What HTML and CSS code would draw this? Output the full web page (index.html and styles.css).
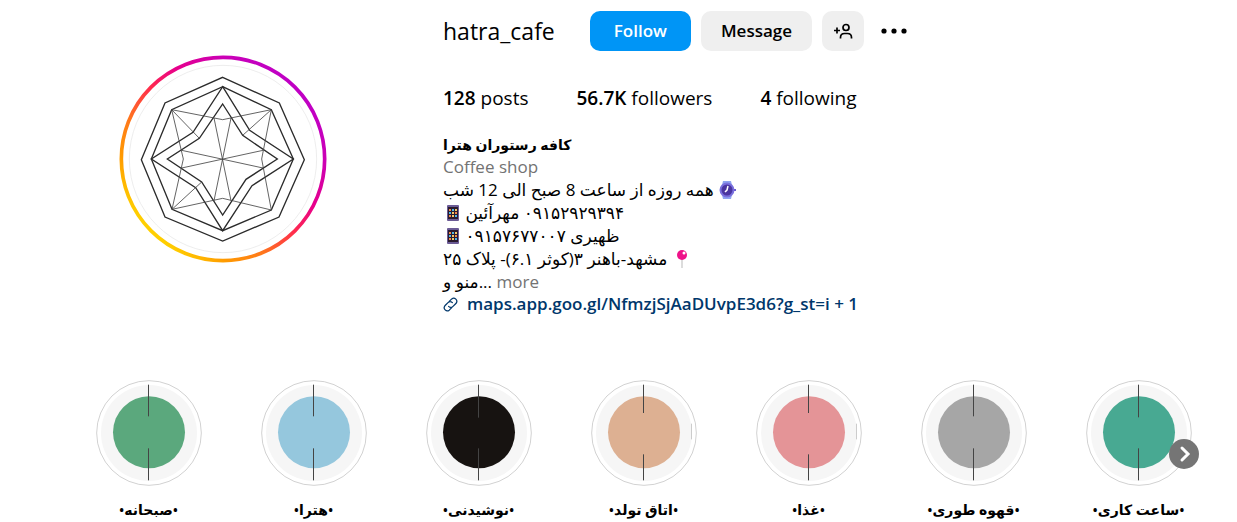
FILE: index.html
```html
<!DOCTYPE html>
<html lang="en">
<head>
<meta charset="utf-8">
<meta name="viewport" content="width=device-width, initial-scale=1">
<title>hatra_cafe</title>
<link rel="stylesheet" href="styles.css">
</head>
<body>
<main class="profile">

<header class="top">
	<div class="avatar">
		<svg viewBox="28 30 624 624" role="img" aria-label="hatra_cafe">
			<defs>
				<linearGradient id="ring" x1="0.15" y1="0.85" x2="0.85" y2="0.15">
					<stop offset="0" stop-color="#ffcf00"/>
					<stop offset="0.15" stop-color="#ff9a00"/>
					<stop offset="0.3" stop-color="#ff7a1a"/>
					<stop offset="0.5" stop-color="#ff2a4e"/>
					<stop offset="0.65" stop-color="#e8008a"/>
					<stop offset="0.85" stop-color="#cc00b4"/>
					<stop offset="1" stop-color="#c000c4"/>
				</linearGradient>
			</defs>
			<circle cx="340" cy="342" r="305" fill="none" stroke="url(#ring)" stroke-width="11"/>
			<circle cx="340" cy="342" r="281" fill="none" stroke="#e4e4e4" stroke-width="2"/>
			<g fill="none" stroke="#2b2b2b" stroke-width="4">
				<path d="M339 97L509 174L584 344L508 516L339 588L166 516L95 344L166 174Z"/>
				<path d="M339 125L485 194L551 342L485 495L339 557L187 493L125 342L186 194Z"/>
				<path d="M339 125L420 256L551 342L427 422L339 557L258 428L125 342L250 262Z"/>
				<path d="M339 177L399 271L503 342L409 403L339 510L276 411L173 342L269 280Z"/>
			</g>
			<g fill="none" stroke="#444" stroke-width="2.5">
				<path d="M313 219L364 467M364 219L313 467M216 316L460 369M460 316L216 369"/>
				<path d="M186 194L339 224L485 194L456 342L485 495L339 460L187 493L221 342Z"/>
				<path d="M186 194L269 280M485 194L399 271M187 493L276 411"/>
			</g>
		</svg>
	</div>

	<section class="info">
		<div class="title-row">
			<h1 class="username">hatra_cafe</h1>
			<div class="actions">
				<button class="btn btn-follow" type="button">Follow</button>
				<button class="btn btn-message" type="button">Message</button>
				<button class="btn btn-suggest" type="button" aria-label="Similar accounts">
					<svg viewBox="0 0 20 16" width="20" height="16" fill="none" stroke="#000" stroke-width="1.7">
						<circle cx="13" cy="4.5" r="3"/>
						<path d="M7.5 15.5v-1c0-2.500 1.500-4 4-4h3c2.500 0 4 1.500 4 4v1M4 4.500v6M1 7.500h6"/>
					</svg>
				</button>
				<button class="btn-more" type="button" aria-label="Options">
					<svg viewBox="0 0 26 6" width="26" height="6">
						<circle cx="3" cy="3" r="2.6"/><circle cx="13" cy="3" r="2.6"/><circle cx="23" cy="3" r="2.6"/>
					</svg>
				</button>
			</div>
		</div>

		<ul class="stats">
			<li><b>128</b> posts</li>
			<li><b>56.7K</b> followers</li>
			<li><b>4</b> following</li>
		</ul>

		<div class="bio">
			<div class="name" lang="fa" dir="rtl">کافه رستوران هترا</div>
			<div class="category">Coffee shop</div>
			<div class="line" lang="fa" dir="rtl"><svg class="emoji" viewBox="0 0 18 18"><path d="M5 0h8l1 4H4zM4 14h10l-1 4H5z" fill="#8fa4f0"/><circle cx="9" cy="9" r="6.5" fill="#4a35a0" stroke="#7a70dd" stroke-width="2"/><path d="M16 8h2v2h-2z" fill="#6a5bd0"/><path d="M10 5L9 9L7 11" fill="none" stroke="#fff" stroke-width="1.5"/></svg> همه روزه از ساعت 8 صبح الی 12 شب</div>
			<div class="line" lang="fa" dir="rtl">۰۹۱۵۲۹۲۹۳۹۴ مهرآئین <svg class="emoji" viewBox="1 0 18 18"><rect x="5" y="1" width="12" height="16" rx="1" fill="#6b5b95"/><rect x="6" y="3" width="10" height="12" fill="#2a1b2e"/><path d="M7 5h2v2H7zM13 8h2v2h-2zM7 11h2v2H7z" fill="#f08a4b"/><path d="M10 5h2v2h-2zM7 8h2v2H7zM13 11h2v2h-2z" fill="#4db8e8"/><path d="M13 5h2v2h-2zM10 8h2v2h-2zM10 11h2v2h-2z" fill="#f3c969"/></svg></div>
			<div class="line" lang="fa" dir="rtl">ظهیری ۰۹۱۵۷۶۷۷۰۰۷ <svg class="emoji" viewBox="1 0 18 18"><rect x="5" y="1" width="12" height="16" rx="1" fill="#6b5b95"/><rect x="6" y="3" width="10" height="12" fill="#2a1b2e"/><path d="M7 5h2v2H7zM13 8h2v2h-2zM7 11h2v2H7z" fill="#f08a4b"/><path d="M10 5h2v2h-2zM7 8h2v2H7zM13 11h2v2h-2z" fill="#4db8e8"/><path d="M13 5h2v2h-2zM10 8h2v2h-2zM10 11h2v2h-2z" fill="#f3c969"/></svg></div>
			<div class="line" lang="fa" dir="rtl"><svg class="emoji" viewBox="0 0 18 18"><path d="M10 9v9" stroke="#b9b9b9" stroke-width="1"/><circle cx="10" cy="5" r="5" fill="#ee1289"/><circle cx="12" cy="3" r="1.500" fill="#fff"/></svg> مشهد-باهنر ۳(کوثر ۶.۱)- پلاک ۲۵</div>
			<div class="line"><span lang="fa">منو و</span>... <button class="more" type="button">more</button></div>
			<a class="link" href="#">
				<svg viewBox="0 0 24 24" width="15" height="15" fill="none" stroke="#00376b" stroke-width="2" stroke-linecap="round">
					<path d="M10 7l4-4a5 5 0 0 1 7 7l-5 5a5 5 0 0 1-7 0M14 17l-4 4a5 5 0 0 1-7-7l5-5a5 5 0 0 1 7 0"/>
				</svg>
				<span>maps.app.goo.gl/NfmzjSjAaDUvpE3d6?g_st=i + 1</span>
			</a>
		</div>
	</section>
</header>

<section class="highlights" aria-label="Highlights">
	<button class="highlight green" type="button">
		<svg viewBox="0 0 318 318"><circle class="edge" cx="159" cy="159" r="157"/><circle class="plate" cx="159" cy="159" r="144"/><circle class="disc" cx="159" cy="157" r="108"/><path class="hand" d="M157.5 14V109M157.5 205V301"/></svg>
		<span lang="fa" dir="rtl">•صبحانه•</span>
	</button>
	<button class="highlight blue" type="button">
		<svg viewBox="0 0 318 318"><circle class="edge" cx="159" cy="159" r="157"/><circle class="plate" cx="159" cy="159" r="144"/><circle class="disc" cx="159" cy="157" r="108"/><path class="hand" d="M157.5 14V109M157.5 205V301"/></svg>
		<span lang="fa" dir="rtl">•هترا•</span>
	</button>
	<button class="highlight black" type="button">
		<svg viewBox="0 0 318 318"><circle class="edge" cx="159" cy="159" r="157"/><circle class="plate" cx="159" cy="159" r="144"/><circle class="disc" cx="159" cy="157" r="108"/><path class="hand" d="M157.5 14V113M157.5 205V301"/></svg>
		<span lang="fa" dir="rtl">•نوشیدنی•</span>
	</button>
	<button class="highlight beige" type="button">
		<svg viewBox="0 0 318 318"><circle class="edge" cx="159" cy="159" r="157"/><circle class="plate" cx="159" cy="159" r="144"/><circle class="disc" cx="159" cy="157" r="108"/><path class="hand" d="M157.5 14V99M157.5 223V301"/><path class="mark" d="M301.5 131V178"/></svg>
		<span lang="fa" dir="rtl">•اتاق تولد•</span>
	</button>
	<button class="highlight pink" type="button">
		<svg viewBox="0 0 318 318"><circle class="edge" cx="159" cy="159" r="157"/><circle class="plate" cx="159" cy="159" r="144"/><circle class="disc" cx="159" cy="157" r="108"/><path class="hand" d="M157.5 14V99M157.5 223V301"/><path class="mark" d="M301.5 131V178"/></svg>
		<span lang="fa" dir="rtl">•غذا•</span>
	</button>
	<button class="highlight grey" type="button">
		<svg viewBox="0 0 318 318"><circle class="edge" cx="159" cy="159" r="157"/><circle class="plate" cx="159" cy="159" r="144"/><circle class="disc" cx="159" cy="157" r="108"/><path class="hand" d="M157.5 14V109M157.5 205V301"/></svg>
		<span lang="fa" dir="rtl">•قهوه طوری•</span>
	</button>
	<button class="highlight teal" type="button">
		<svg viewBox="0 0 318 318"><circle class="edge" cx="159" cy="159" r="157"/><circle class="plate" cx="159" cy="159" r="144"/><circle class="disc" cx="159" cy="157" r="108"/><path class="hand" d="M157.5 14V112M157.5 205V301"/></svg>
		<span lang="fa" dir="rtl">•ساعت کاری•</span>
	</button>
	<button class="next" type="button" aria-label="Next">
		<svg viewBox="0 0 30 30" width="30" height="30" fill="none" stroke="#fff" stroke-width="3"><path d="M13 9l6 6l-6 6" stroke-linecap="round"/></svg>
	</button>
</section>

</main>
</body>
</html>
```
FILE: styles.css
```css
* {
	box-sizing: border-box;
}

body {
	margin: 0;
	background: #fff;
	color: #000;
	font-family: "Segoe UI", "Open Sans", "Noto Sans", "DejaVu Sans", sans-serif;
	font-size: 17px;
	line-height: 22px;
}

button {
	border: 0;
	padding: 0;
	background: none;
	color: inherit;
	font: inherit;
	cursor: pointer;
}

.profile {
	max-width: 1169px;
	margin: 0 auto;
	padding-top: 11px;
}

/* header */
.top {
	display: grid;
	grid-template-columns: 378px 1fr;
	column-gap: 31px;
}

.avatar {
	display: flex;
	justify-content: center;
	padding-top: 44px;
}

.avatar svg {
	width: 208px;
	height: 208px;
}

.title-row {
	display: flex;
	align-items: center;
	gap: 35px;
}

.username {
	margin: 0;
	font-size: 23px;
	line-height: 40px;
	font-weight: 400;
}

.actions {
	display: flex;
	align-items: center;
	gap: 10px;
}

.btn {
	height: 40px;
	padding: 0 20px;
	border-radius: 10px;
	background: #efefef;
	font-weight: 600;
}

.btn-follow {
	padding: 0 24px;
	background: #0095f6;
	color: #fff;
}

.btn-suggest {
	display: flex;
	align-items: center;
	padding: 0 11px;
}

.btn-more {
	display: flex;
	padding: 7px;
}

.stats {
	display: flex;
	gap: 48px;
	margin: 0;
	padding: 36px 0 25px;
	list-style: none;
	font-size: 19px;
}

.stats b,
.name,
.link {
	font-weight: 600;
}

.bio [dir="rtl"] {
	text-align: left;
}

.name {
	font-size: 14px;
}

.category,
.more {
	color: #737373;
}

.line {
	line-height: 23px;
	white-space: nowrap;
}

.emoji {
	width: 18px;
	height: 18px;
	vertical-align: -3px;
}

.link {
	display: flex;
	align-items: center;
	gap: 9px;
	color: #00376b;
	text-decoration: none;
}

/* story highlights */
.highlights {
	position: relative;
	display: flex;
	padding-left: 32px;
	margin-top: 65px;
}

.highlight {
	flex: 0 0 165px;
	display: flex;
	flex-direction: column;
	align-items: center;
	gap: 13px;
	font-size: 14px;
	font-weight: 600;
}

.highlight svg {
	width: 106px;
	height: 106px;
}

.edge {
	fill: #fff;
	stroke: #d2d2d2;
	stroke-width: 3;
}

.plate {
	fill: #f6f6f6;
}

.disc {
	fill: currentColor;
}

.hand {
	stroke: #444;
	stroke-width: 3;
}

.mark {
	stroke: #ccc;
	stroke-width: 3;
}

.green svg { color: #5ba87d; }
.blue svg { color: #95c7dd; }
.black svg { color: #171311; }
.beige svg { color: #ddb092; }
.pink svg { color: #e49497; }
.grey svg { color: #a6a6a6; }
.teal svg { color: #48a992; }

.next {
	position: absolute;
	top: 59px;
	right: 4px;
	width: 30px;
	height: 30px;
	border-radius: 50%;
	background: #757575;
}

.next svg {
	display: block;
}
```
